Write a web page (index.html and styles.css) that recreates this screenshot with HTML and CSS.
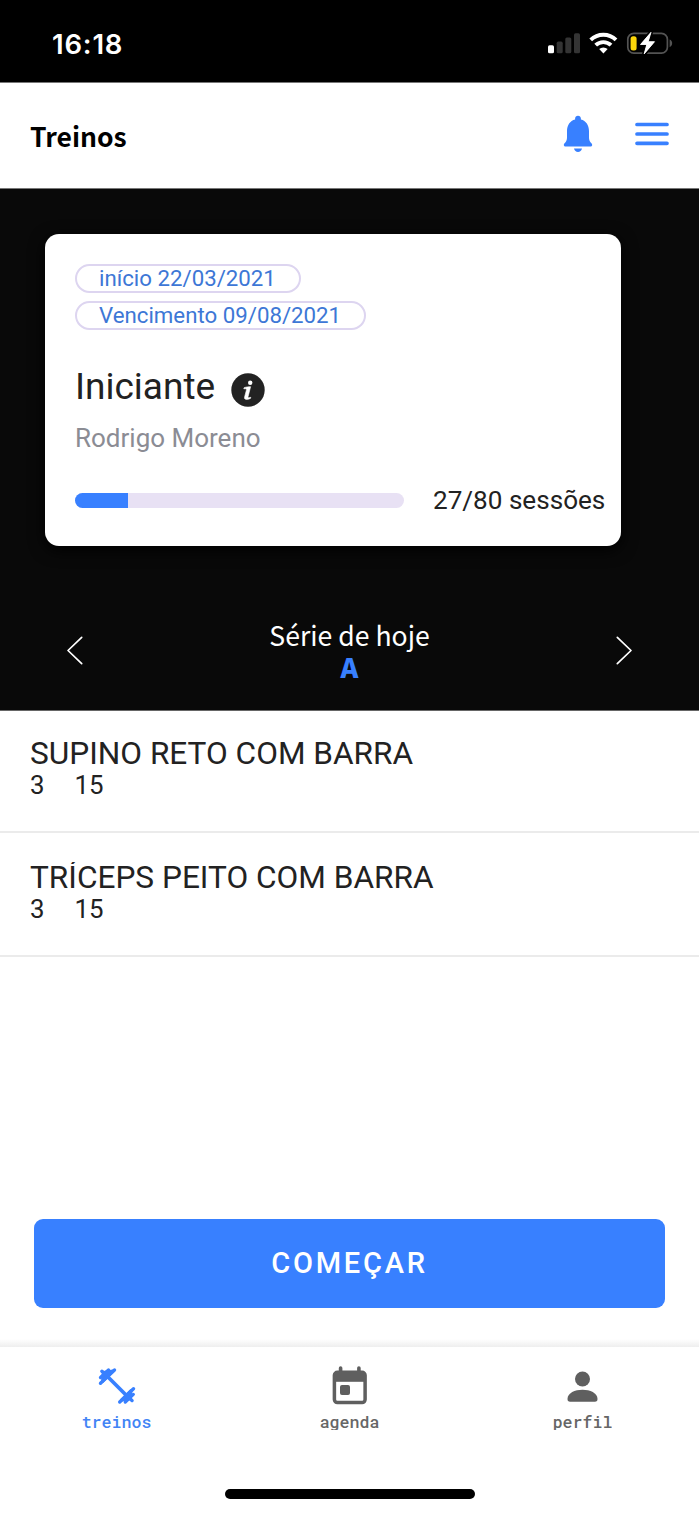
FILE: index.html
```html
<!DOCTYPE html>
<html lang="pt-BR">
<head>
<meta charset="utf-8">
<title>Treinos</title>
<link rel="stylesheet" href="styles.css">
</head>
<body>
<div class="app">
  <div class="status">
    <span class="clock">16:18</span>
    <svg class="status-icons" width="126" height="26" viewBox="547 30 126 26">
      <rect x="548" y="45.3" width="6" height="8" rx="1.6" fill="#fff"/>
      <g fill="#343434"><rect x="556.7" y="41.6" width="6" height="11.7" rx="1.6"/><rect x="565.3" y="37.4" width="6" height="15.9" rx="1.6"/><rect x="574" y="33.2" width="6" height="20.1" rx="1.6"/></g>
      <g fill="none" stroke="#fff" stroke-width="3.9"><path d="M590.7 39.9a18.2 18.2 0 0 1 25.3 0"/><path d="M595.7 45.2a11 11 0 0 1 15.3 0"/></g>
      <path d="M603.4 53.4l-4.2-4.300a6.200 6.200 0 0 1 8.400 0z" fill="#fff"/>
      <rect x="627.8" y="33.4" width="39.6" height="19.8" rx="6" fill="none" stroke="#535353" stroke-width="1.7"/>
      <path d="M669.6 39.5c3.4 1.2 3.4 6.3 0 7.5z" fill="#535353"/>
      <rect x="630.6" y="36.2" width="6" height="14.2" rx="2.5" fill="#fcd60a"/>
      <path d="M651 32.300L640.500 44.500h6.300l-2.700 9.500L654.500 41.700h-6.300z" fill="#fff" stroke="#000" stroke-width="4" paint-order="stroke" stroke-linejoin="round"/>
      <path d="M651 32.300L640.500 44.500h6.300l-2.700 9.500L654.500 41.700h-6.300z" fill="#fff" stroke="#fff" stroke-width=".8" stroke-linejoin="round"/>
    </svg>
  </div>
  <header class="header">
    <h1 class="title">Treinos</h1>
    <div class="actions">
      <svg width="30" height="38" viewBox="0 0 30 38" fill="#3880ff"><path d="M15 .8c-1.7 0-2.900 1.200-2.900 2.800v.9C7 5.700 4 10.400 4 16v6.500c0 2-.6 3.600-1.700 5C1.200 28.600.8 29.200.8 30c0 .9.7 1.500 1.700 1.500h25c1 0 1.700-.6 1.700-1.500 0-.8-.4-1.400-1.500-2.500-1.100-1.400-1.700-3-1.700-5V16c0-5.600-3-10.300-8.100-11.500v-.9C17.900 2 16.700.8 15 .8z"/><path d="M11 33.600h8c-.5 2-2 3.500-4 3.500s-3.500-1.500-4-3.500z"/></svg>
      <svg width="34" height="24" viewBox="0 0 34 24" stroke="#3880ff" stroke-width="3.7" stroke-linecap="round"><path d="M2 2.500h30M2 12h30M2 21.300h30"/></svg>
    </div>
  </header>
  <section class="hero">
    <article class="card">
      <span class="chip chip-start">início 22/03/2021</span>
      <span class="chip chip-end">Vencimento 09/08/2021</span>
      <div class="level"><span>Iniciante</span>
        <svg width="34" height="34" viewBox="0 0 34 34"><circle cx="17" cy="17" r="16.7" fill="#222"/><circle cx="19.200" cy="9.800" r="2.200" fill="#fff"/><path d="M13 14.800c2.200-.9 4.200-1.100 6.600-1.100l-2.600 10.200c-.2 1 .7 1 2.800.4l-.4 1.200c-3.600 1.500-6.500 1.300-5.800-1.600l1.900-7.200c.2-.9-.6-1-2.700-.9z" fill="#fff" stroke="#fff" stroke-width=".6"/></svg>
      </div>
      <p class="coach">Rodrigo Moreno</p>
      <div class="progress"><div class="track"><div class="fill" style="width:53px"></div></div><span class="sessions">27/80 sessões</span></div>
    </article>
    <nav class="series">
      <svg width="17" height="29" viewBox="0 0 17 29" fill="none" stroke="#fff" stroke-width="1.7" stroke-linecap="round" stroke-linejoin="round"><path d="M15.7 1.3L2 14.500l13.700 13.200"/></svg>
      <div class="series-text"><span class="today">Série de hoje</span><b class="letter">A</b></div>
      <svg width="17" height="29" viewBox="0 0 17 29" fill="none" stroke="#fff" stroke-width="1.7" stroke-linecap="round" stroke-linejoin="round"><path d="M1.3 1.3l13.7 13.2L1.3 27.7"/></svg>
    </nav>
  </section>
  <ul class="list">
    <li class="item"><span class="name">SUPINO RETO COM BARRA</span><span class="sets"><span>3</span><span>15</span></span></li>
    <li class="item"><span class="name">TRÍCEPS PEITO COM BARRA</span><span class="sets"><span>3</span><span>15</span></span></li>
  </ul>
  <main class="action"><button class="start">COMEÇAR</button></main>
  <footer class="tabs">
    <div class="tab active">
      <svg width="40" height="40" viewBox="0 0 40 40" stroke="#3880ff" stroke-linecap="round" stroke-linejoin="round" fill="#3880ff"><path d="M10 10l20 20" stroke-width="3.8"/><path d="M6.500 6.500L12.500 5.500 16 5 5.500 15.500 6 11zM34 24.500l-.5 5-1 3-3 1-5 .5z" stroke-width="3"/><path d="M3.500 17.300L17.500 4M22.700 36L36.500 22.700" stroke-width="3.400"/><path d="M3.500 11.500L11.500 4M28.300 36l8-7.600" stroke-width="3.300"/><path d="M4.900 5.300l4 4M31 31l4 3.500" stroke-width="3.500"/></svg>
      <span>treinos</span>
    </div>
    <div class="tab">
      <svg width="40" height="40" viewBox="0 0 40 40" fill="none"><path d="M10.600 2v6M28.900 2v6" stroke="#5f5f5f" stroke-width="3.6" stroke-linecap="round"/><rect x="4.4" y="6.3" width="30.7" height="30.300" rx="3" stroke="#5f5f5f" stroke-width="3.5"/><path d="M4 7h31v8.800H4z" fill="#5f5f5f"/><rect x="10" y="19" width="10" height="10" rx="2" fill="#5f5f5f"/></svg>
      <span>agenda</span>
    </div>
    <div class="tab">
      <svg width="40" height="40" viewBox="0 0 40 40" fill="#5f5f5f"><circle cx="19.500" cy="13" r="7.500"/><path d="M4.500 33c0-6 7.500-9.200 15-9.200s15 3.200 15 9.200c0 1.900-.8 2.700-2.600 2.700H7.100C5.300 35.700 4.500 34.900 4.500 33z"/></svg>
      <span>perfil</span>
    </div>
  </footer>
  <div class="home"><div class="bar"></div></div>
</div>
</body>
</html>
```

FILE: styles.css
```css
* { box-sizing: border-box; margin: 0; padding: 0; }
body { background: #fff; color: #222; font-family: Roboto, sans-serif; }
svg { display: block; flex: none; }
.app { width: 699px; height: 1515px; display: flex; flex-direction: column; overflow: hidden; }
.app > * { flex: none; }
.status { height: 82px; background: #000; display: flex; justify-content: space-between; padding: 30px 26px 0 52px; }
.clock { font: 600 27.5px/28px Inter, sans-serif; color: #fff; letter-spacing: 0.8px; }
.header { height: 107px; border-top: 1px solid #777; border-bottom: 1px solid #777; display: flex; justify-content: space-between; padding: 32px 30px 0 30px; }
.title { font: 700 26.5px/42px "Noto Sans CJK JP", sans-serif; color: #000; }
.actions { display: flex; gap: 42px; }
.actions svg:last-child { margin-top: 7px; }
.hero { height: 522px; background: #090909; border-bottom: 1px solid #666; padding: 45px 45px 0; }
.card { width: 576px; height: 312px; background: #fff; border-radius: 14px; padding: 30px 15px 0 30px; box-shadow: 0 4px 16px #000; }
.chip { display: block; height: 29px; border: 2px solid #ddd5f0; border-radius: 15px; padding-left: 22px; font-size: 22.25px; line-height: 24px; color: #3d77d6; white-space: nowrap; }
.chip-start { width: 226px; }
.chip-end { width: 291px; margin-top: 8px; }
.level { display: flex; gap: 16px; align-items: center; height: 46px; margin-top: 34px; font-size: 37px; line-height: 46px; }
.level svg { margin-top: 5px; }
.coach { font-size: 26px; line-height: 32px; margin-top: 12px; color: #8b8c94; }
.progress { display: flex; align-items: center; gap: 29px; height: 32px; margin-top: 30px; }
.track { width: 329px; height: 15px; border-radius: 8px; background: #e8e1f4; overflow: hidden; }
.fill { height: 15px; background: #3880ff; }
.sessions { font-size: 26.1px; line-height: 32px; white-space: nowrap; }
.series { display: flex; justify-content: space-between; padding: 73px 21px 0; color: #fff; }
.series > svg { margin-top: 17px; }
.series-text { display: flex; flex-direction: column; align-items: center; font: 26.6px/32px "Noto Sans CJK JP", sans-serif; }
.letter { color: #3880ff; font-size: 27px; font-weight: 900; line-height: 31px; }
.list { list-style: none; }
.item { height: 124px; border-bottom: 2px solid #ebebeb; padding: 29px 30px 0; display: flex; flex-direction: column; }
.item:first-child { height: 122px; padding-top: 27px; }
.name { font-size: 31.6px; line-height: 32px; height: 32px; overflow: hidden; margin-bottom: 3px; white-space: nowrap; }
.sets { display: flex; gap: 30px; font-size: 25.8px; line-height: 25px; }
.action { height: 390px; padding: 262px 34px 0; background: linear-gradient(#fff 382px, #eee); }
.start { display: block; width: 631px; height: 89px; border: 0; border-radius: 9px; background: #3880ff; color: #fff; font: 500 29px/88px Roboto, sans-serif; letter-spacing: 2.8px; padding-bottom: 3px; }
.tabs { height: 83px; display: grid; grid-template-columns: repeat(3, 1fr); background: #fff; }
.tab { display: flex; flex-direction: column; align-items: center; padding-top: 19px; color: #666; }
.tab span { height: 18px; margin-top: 6px; overflow: hidden; font: 500 16.6px/19px "Roboto Mono", "DejaVu Sans Mono", monospace; }
.tab.active { color: #4284f5; }
.home { height: 85px; padding-top: 59px; }
.bar { width: 250px; height: 10px; margin: 0 auto; border-radius: 5px; background: #000; }
```
